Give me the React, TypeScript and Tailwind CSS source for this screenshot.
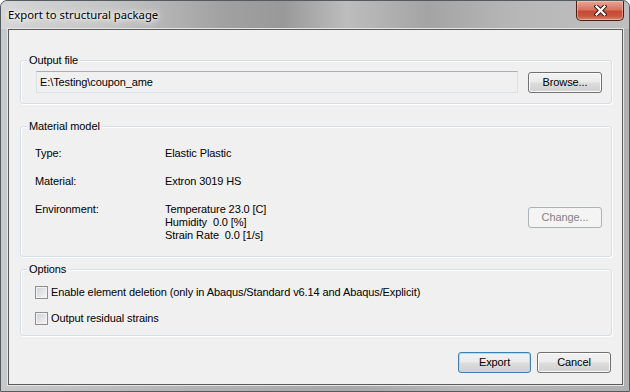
import type { ReactNode } from 'react';

const btn =
    'flex items-center justify-center rounded-[3px] border text-[11px] leading-[13px] bg-[linear-gradient(to_bottom,#f2f2f2_0%,#ebebeb_48%,#dddddd_52%,#cfcfcf_100%)]';

function GroupBox({ label, className, children }: { label: string; className?: string; children?: ReactNode }) {
    return (
        <div className={`relative rounded-[3px] border border-[#d5dfe5] shadow-[inset_1px_1px_0_#ffffff,1px_1px_0_#ffffff] ${className ?? ''}`}>
            <span className="absolute -top-[8px] left-[6px] bg-[#f0f0f0] px-[2px] leading-[14px]">{label}</span>
            {children}
        </div>
    );
}

function CheckRow({ label }: { label: string }) {
    return (
        <div className="flex items-center h-[13px]">
            <span className="w-[13px] h-[13px] border border-[#8e8f8f] bg-[linear-gradient(135deg,#cdd0d4,#f7f7f7)] shadow-[inset_0_0_0_1px_#f4f4f4]" />
            <span className="ml-[3px] leading-[13px]">{label}</span>
        </div>
    );
}

function CloseGlyph() {
    return (
        <svg width="13" height="11" viewBox="0 0 13 11">
            <path d="M2.5 1.5 L10.5 9.5 M10.5 1.5 L2.5 9.5" stroke="#3b1d17" strokeWidth="4.2" strokeLinecap="square" />
            <path d="M2.5 1.5 L10.5 9.5 M10.5 1.5 L2.5 9.5" stroke="#ffffff" strokeWidth="2.2" strokeLinecap="square" />
        </svg>
    );
}

export default function App() {
    return (
        <div className="w-[630px] h-[392px] flex flex-col rounded-t-[7px] border border-[#555a5e] bg-[linear-gradient(to_right,#c9c9c9,#b3b3b3_30%,#a8a8a8_55%,#b8b8b8_75%,#b0b0b0)] font-['Liberation_Sans',Arial,sans-serif] text-[11px] tracking-[-0.1px] text-black overflow-hidden">
            {/* title bar */}
            <div className="h-[28px] flex items-start justify-between bg-[linear-gradient(to_right,#d6d6d6_0%,#c4c4c4_18%,#a0a0a0_36%,#999999_45%,#bdbdbd_55%,#a4a4a4_68%,#b7b7b7_82%,#bfbfbf_100%)] rounded-t-[6px]">
                <span className="self-center ml-[7px] mt-[1px] text-[11.3px] tracking-normal font-['Segoe_UI','Noto_Sans',sans-serif] text-black [text-shadow:0_0_10px_#ffffff,0_0_6px_#ffffff,0_0_3px_#ffffff]">
                    Export to structural package
                </span>
                <button
                    type="button"
                    className="mr-[5px] w-[48px] h-[20px] flex items-center justify-center rounded-b-[5px] border border-t-0 border-[#4a1e14] bg-[linear-gradient(to_bottom,#e8a796_0%,#d8735f_45%,#c64a35_55%,#c8573f_80%,#d98a6f_100%)] shadow-[inset_0_0_0_1px_rgba(255,210,200,0.5)]"
                >
                    <CloseGlyph />
                </button>
            </div>

            {/* client area */}
            <div className="flex-1 flex pl-[7px] pr-[6px] pb-[6px]">
                <div className="flex-1 flex flex-col border border-[#5b5b5b] bg-[#f0f0f0] shadow-[0_0_0_1px_#e6e6e6]">
                    <GroupBox label="Output file" className="mt-[30px] ml-[11px] mr-[10px] h-[44px] flex items-center pl-[15px] pr-[9px]">
                        <div className="flex-1 h-[22px] flex items-center px-[3px] border border-[#dbdfe6] border-t-[#abadb3] bg-[#f0f0f0]">
                            E:\Testing\coupon_ame
                        </div>
                        <button type="button" className={`${btn} ml-[10px] w-[74px] h-[21px] border-[#707070] shadow-[inset_0_0_0_1px_#fcfcfc]`}>
                            Browse...
                        </button>
                    </GroupBox>

                    <GroupBox label="Material model" className="mt-[22px] ml-[11px] mr-[10px] h-[131px] pl-[14px] pr-[9px] pt-[20px]">
                        <div className="flex leading-[13px]">
                            <span className="w-[130px]">Type:</span>
                            <span>Elastic Plastic</span>
                        </div>
                        <div className="flex leading-[13px] mt-[15px]">
                            <span className="w-[130px]">Material:</span>
                            <span>Extron 3019 HS</span>
                        </div>
                        <div className="flex leading-[13px] mt-[15px]">
                            <span className="w-[130px]">Environment:</span>
                            <div className="flex flex-col">
                                <span>Temperature 23.0 [C]</span>
                                <span>Humidity&nbsp; 0.0 [%]</span>
                                <span>Strain Rate&nbsp; 0.0 [1/s]</span>
                            </div>
                            <button
                                type="button"
                                disabled
                                className="ml-auto mt-[4px] w-[74px] h-[21px] flex items-center justify-center rounded-[3px] border border-[#adb2b5] bg-[#f4f4f4] text-[#838383]"
                            >
                                Change...
                            </button>
                        </div>
                    </GroupBox>

                    <GroupBox label="Options" className="mt-[12px] ml-[11px] mr-[10px] h-[67px] pl-[14px] pt-[16px] flex flex-col gap-[13px]">
                        <CheckRow label="Enable element deletion (only in Abaqus/Standard v6.14 and Abaqus/Explicit)" />
                        <CheckRow label="Output residual strains" />
                    </GroupBox>

                    <div className="mt-[16px] mr-[11px] flex justify-end gap-[6px]">
                        <button
                            type="button"
                            className={`${btn} w-[73px] h-[21px] border-[#3c7fb1] shadow-[inset_0_0_0_1px_#a9def7]`}
                        >
                            Export
                        </button>
                        <button type="button" className={`${btn} w-[74px] h-[21px] border-[#707070] shadow-[inset_0_0_0_1px_#fcfcfc]`}>
                            Cancel
                        </button>
                    </div>
                </div>
            </div>
        </div>
    );
}
